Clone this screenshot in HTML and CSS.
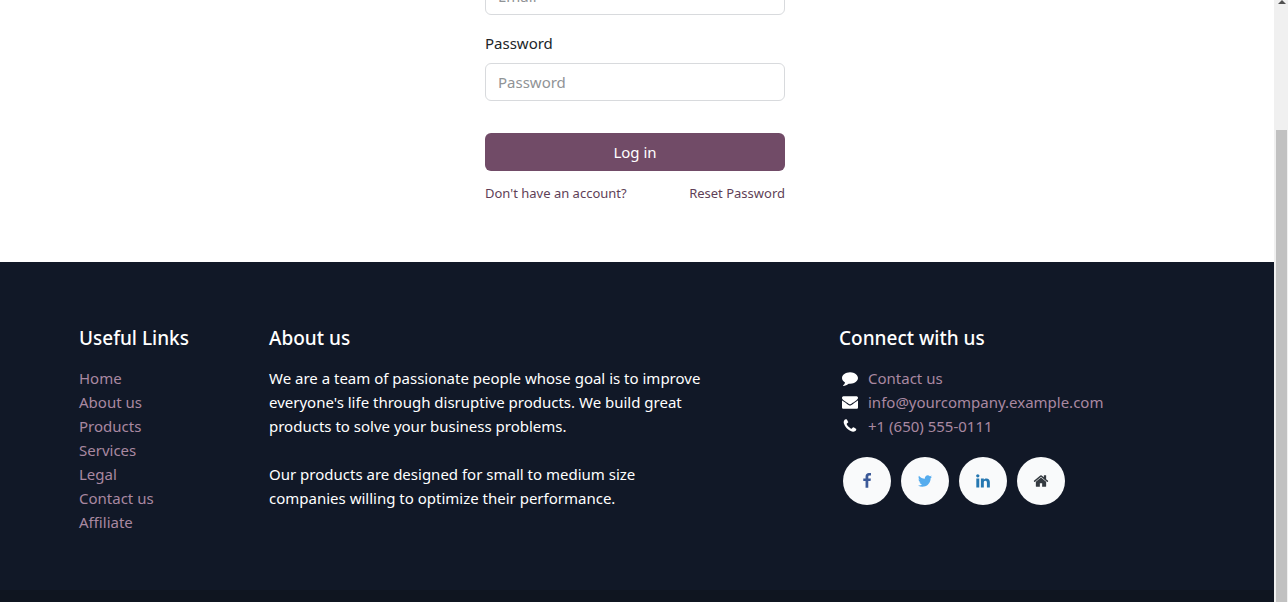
FILE: index.html
```html
<!DOCTYPE html>
<html lang="en">
<head>
  <meta charset="UTF-8" />
  <meta name="viewport" content="width=device-width, initial-scale=1.0"/>
  <title>Login</title>
  <link rel="stylesheet" href="styles.css">
</head>
<body>

  <div class="page">
    <main class="login">
      <form class="login-form">
        <div class="field">
          <input type="email" id="email" placeholder="Email" aria-label="Email">
        </div>
        <div class="field">
          <label for="password">Password</label>
          <input type="password" id="password" placeholder="Password">
        </div>
        <button type="submit" class="btn">Log in</button>
        <div class="form-links">
          <a href="#">Don't have an account?</a>
          <a href="#">Reset Password</a>
        </div>
      </form>
    </main>

    <footer>
      <div class="container">
        <div class="useful">
          <h5>Useful Links</h5>
          <ul>
            <li><a href="#">Home</a></li>
            <li><a href="#">About us</a></li>
            <li><a href="#">Products</a></li>
            <li><a href="#">Services</a></li>
            <li><a href="#">Legal</a></li>
            <li><a href="#">Contact us</a></li>
            <li><a href="#">Affiliate</a></li>
          </ul>
        </div>
        <div class="about">
          <h5>About us</h5>
          <p>We are a team of passionate people whose goal is to improve everyone's life through disruptive products. We build great products to solve your business problems.</p>
          <p>Our products are designed for small to medium size companies willing to optimize their performance.</p>
        </div>
        <div class="connect">
          <h5>Connect with us</h5>
          <ul class="contact">
            <li>
              <svg viewBox="0 0 1792 1792"><path d="M1792 896q0 174-120 321.5t-326 233-450 85.5q-70 0-145-8-198 175-460 242-49 14-114 22-17 2-30.5-9t-17.5-29v-1q-3-4-.5-12t2-10 4.5-9.5l6-9 7-8.5 8-9q7-8 31-34.5t34.5-38 31-39.5 32.5-51 27-59 26-76q-157-89-247.5-220t-90.5-281q0-130 71-248.5t191-204.5 286-136.5 348-50.5q244 0 450 85.5t326 233 120 321.5z"/></svg>
              <a href="#">Contact us</a>
            </li>
            <li>
              <svg viewBox="0 0 1792 1792"><path d="M1792 710v794q0 66-47 113t-113 47h-1472q-66 0-113-47t-47-113v-794q44 49 101 87 362 246 497 345 57 42 92.5 65.5t94.5 48 110 24.5h2q51 0 110-24.5t94.5-48 92.5-65.5q170-123 498-345 57-39 100-87zm0-294q0 79-49 151t-122 123q-376 261-468 325-10 7-42.5 31t-54 38.5-52 32.5-57.5 27-50 9h-2q-23 0-50-9t-57.5-27-52-32.5-54-38.5-42.5-31q-91-64-262-182.5t-205-142.5q-62-42-117-115.5t-55-136.5q0-78 41.5-130t118.5-52h1472q65 0 112.5 47t47.5 113z"/></svg>
              <a href="mailto:info@yourcompany.example.com">info@yourcompany.example.com</a>
            </li>
            <li>
              <svg viewBox="0 0 1792 1792"><path d="M1600 1240q0 27-10 70.5t-21 68.5q-21 50-122 106-94 51-186 51-27 0-53-3.5t-57.5-12.5-47-14.5-55.5-20.5-49-18q-98-35-175-83-127-79-264-216t-216-264q-48-77-83-175-3-9-18-49t-20.5-55.5-14.5-47-12.5-57.5-3.5-53q0-92 51-186 56-101 106-122 25-11 68.5-21t70.5-10q14 0 21 3 18 6 53 76 11 19 30 54t35 63.5 31 53.5q3 4 17.5 25t21.5 35.5 7 28.5q0 20-28.5 50t-62 55-62 53-28.5 46q0 9 5 22.5t8.5 20.5 14 24 11.5 19q76 137 174 235t235 174q2 1 19 11.5t24 14 20.5 8.5 22.5 5q18 0 46-28.5t53-62 55-62 50-28.5q14 0 28.5 7t35.5 21.5 25 17.5q25 15 53.5 31t63.5 35 54 30q70 35 76 53 3 7 3 21z"/></svg>
              <a href="tel:+16505550111">+1 (650) 555-0111</a>
            </li>
          </ul>
          <div class="social">
            <a href="#" class="facebook" aria-label="Facebook"><svg viewBox="0 0 1792 1792"><path d="M1343 12v264h-157q-86 0-116 36t-30 108v189h293l-39 296h-254v759h-306v-759h-255v-296h255v-218q0-186 104-288.5t277-102.5q147 0 228 12z"/></svg></a>
            <a href="#" class="twitter" aria-label="Twitter"><svg viewBox="0 0 1792 1792"><path d="M1684 408q-67 98-162 167 1 14 1 42 0 130-38 259.5t-115.5 248.5-184.5 210.5-258 146-323 54.5q-271 0-496-145 35 4 78 4 225 0 401-138-105-2-188-64.5t-114-159.5q33 5 61 5 43 0 85-11-112-23-185.5-111.5t-73.5-205.5v-4q68 38 146 41-66-44-105-115t-39-154q0-88 44-163 121 149 294.5 238.5t371.5 99.5q-8-38-8-74 0-134 94.5-228.5t228.5-94.5q140 0 236 102 109-21 205-78-37 115-142 178 93-10 186-50z"/></svg></a>
            <a href="#" class="linkedin" aria-label="LinkedIn"><svg viewBox="0 0 1792 1792"><path d="M477 625v991h-330v-991h330zm21-306q1 73-50.5 122t-135.5 49h-2q-82 0-132-49t-50-122q0-74 51.5-122.5t134.5-48.5 133 48.5 51 122.5zm1166 729v568h-329v-530q0-105-40.5-164.5t-126.5-59.5q-63 0-105.5 34.5t-63.5 85.5q-11 30-11 81v553h-329q2-399 2-647t-1-296l-1-48h329v144h-2q20-32 41-56t56.5-52 87-43.5 114.5-15.5q171 0 275 113.5t104 332.5z"/></svg></a>
            <a href="#" class="home" aria-label="Home"><svg viewBox="0 0 1792 1792"><path d="M1472 992v480q0 26-19 45t-45 19h-384v-384h-256v384h-384q-26 0-45-19t-19-45v-480q0-1 .5-3t.5-3l575-474 575 474q1 2 1 6zm223-69l-62 74q-8 9-21 11h-3q-13 0-21-7l-692-577-692 577q-12 8-24 7-13-2-21-11l-62-74q-8-10-7-23.5t11-21.5l719-599q32-26 76-26t76 26l244 204v-195q0-14 9-23t23-9h192q14 0 23 9t9 23v408l219 182q10 8 11 21.5t-7 23.5z"/></svg></a>
          </div>
        </div>
      </div>
      <div class="copyright"></div>
    </footer>
  </div>

  <div class="scrollbar">
    <div class="arrow"></div>
    <div class="thumb"></div>
  </div>

</body>
</html>
```
FILE: styles.css
```css
* {
    box-sizing: border-box;
}
body {
    margin: 0;
    height: 100vh;
    overflow: hidden;
    display: flex;
    background: #fff;
    color: #212529;
    font-family: "Noto Sans", sans-serif;
    font-size: 15px;
    line-height: 24px;
}
a {
    text-decoration: none;
}
ul {
    list-style: none;
    margin: 0;
    padding: 0;
}
svg {
    display: block;
    width: 16px;
    height: 16px;
    fill: currentColor;
}
.page {
    flex: 1;
    display: flex;
    flex-direction: column;
    overflow: hidden;
}

/* login form, scrolled part of the way out at the top */
.login {
    margin-top: -23px;
    padding: 0 4px 58px 0;
}
.login-form {
    max-width: 300px;
    margin: 0 auto;
}
.field {
    margin-bottom: 16px;
}
.field label {
    display: block;
    margin-bottom: 8px;
}
.field input {
    display: block;
    width: 100%;
    height: 38px;
    padding: 6px 12px;
    border: 1px solid #d8dadd;
    border-radius: 6px;
    background: #fff;
    font: inherit;
}
.field input::placeholder {
    color: #909396;
}
.btn {
    display: block;
    width: 100%;
    height: 38px;
    margin-top: 32px;
    border: 0;
    border-radius: 6px;
    background: #714b67;
    color: #fff;
    font: inherit;
}
.form-links {
    display: flex;
    justify-content: space-between;
    margin-top: 12px;
    font-size: 13px;
    line-height: 21px;
}
.form-links a {
    color: #5f3f57;
}

footer {
    flex: 1;
    display: flex;
    flex-direction: column;
    background: #111827;
    color: #fff;
}
.container {
    display: grid;
    grid-template-columns: repeat(12, 1fr);
    width: 100%;
    max-width: 1140px;
    margin: 0 auto;
    padding: 64px 0 56px;
}
.useful,
.about,
.connect {
    padding-left: 12px;
}
.useful {
    grid-column: 1 / 3;
}
.about {
    grid-column: 3 / 8;
    padding-right: 24px;
}
.connect {
    grid-column: 9 / 13;
}
h5 {
    margin: 0 0 16px;
    font-size: 19px;
    font-weight: 500;
    line-height: 24px;
}
.about p {
    margin: 0 0 24px;
}
.about p:last-child {
    margin-bottom: 0;
}
footer ul a {
    color: #a988a1;
}
.contact li {
    display: flex;
    align-items: center;
    gap: 10px;
    padding-left: 3px;
}
.social {
    display: flex;
    gap: 10px;
    margin-top: 19px;
    padding-left: 4px;
}
.social a {
    display: flex;
    align-items: center;
    justify-content: center;
    width: 48px;
    height: 48px;
    border-radius: 50%;
    background: #f9fafb;
}
.facebook {
    color: #3b5998;
}
.twitter {
    color: #55acee;
}
.linkedin {
    color: #2577b1;
}
.home {
    color: #343a40;
}
.copyright {
    flex: 1;
    background: #0f1520;
}

.scrollbar {
    display: flex;
    flex-direction: column;
    width: 14px;
    padding: 0 1px 0 2px;
    background: #f0f0f0;
}
.arrow {
    height: 130px;
}
.arrow::before {
    content: "";
    display: block;
    width: 0;
    margin: 0 auto;
    border: 4px solid transparent;
    border-top: 0;
    border-bottom-color: #505050;
}
.thumb {
    flex: 1;
    background: #c1c1c1;
}
```
